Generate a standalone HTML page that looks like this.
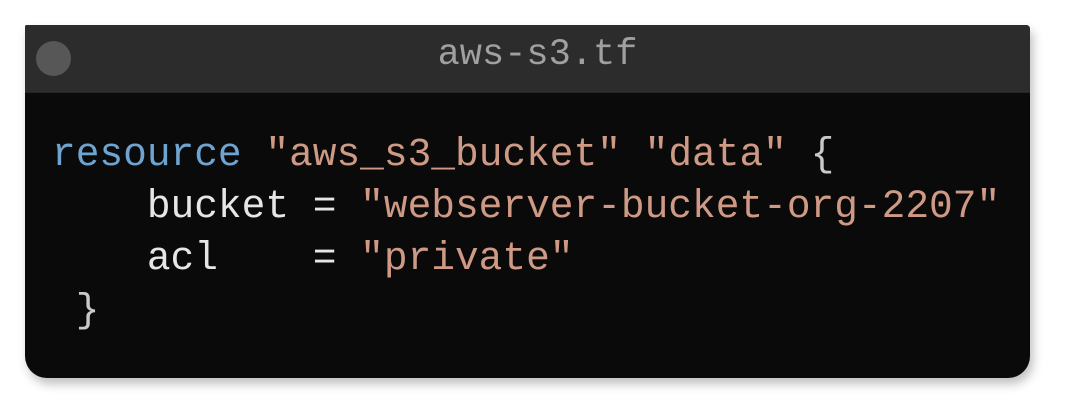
<!DOCTYPE html>
<html><head><meta charset="utf-8"><style>
html,body{margin:0;padding:0;background:#fff;width:1080px;height:406px;overflow:hidden}
.win{position:absolute;left:25px;top:25px;width:1005px;height:353px;background:#0b0a0b;border-radius:2px 4px 22px 22px;box-shadow:3px 6px 10px rgba(0,0,0,0.25);overflow:hidden}
.bar{position:absolute;left:0;top:0;width:100%;height:67px;background:#2c2c2c;border-bottom:1px solid #262626}
.dot{position:absolute;left:11px;top:16px;width:35px;height:35px;border-radius:50%;background:#575757}
.title{position:absolute;left:0;right:0;top:9px;text-align:center;font:37px "Liberation Mono",monospace;color:#a0a0a0;padding-left:20px}
pre{position:absolute;left:27px;top:104px;margin:0;font:39.5px/52px "Liberation Mono",monospace;color:#e6e6e6}
.k{color:#6fa3d0}.s{color:#cf9a85}.p{color:#c9c9c9}
</style></head><body>
<div class="win"><div class="bar"><div class="dot"></div><div class="title">aws-s3.tf</div></div>
<pre><span class="k">resource</span> <span class="s">"aws_s3_bucket"</span> <span class="s">"data"</span> <span class="p">{</span>
    bucket = <span class="s">"webserver-bucket-org-2207"</span>
    acl    = <span class="s">"private"</span>
 <span class="p">}</span></pre>
</div>
</body></html>
